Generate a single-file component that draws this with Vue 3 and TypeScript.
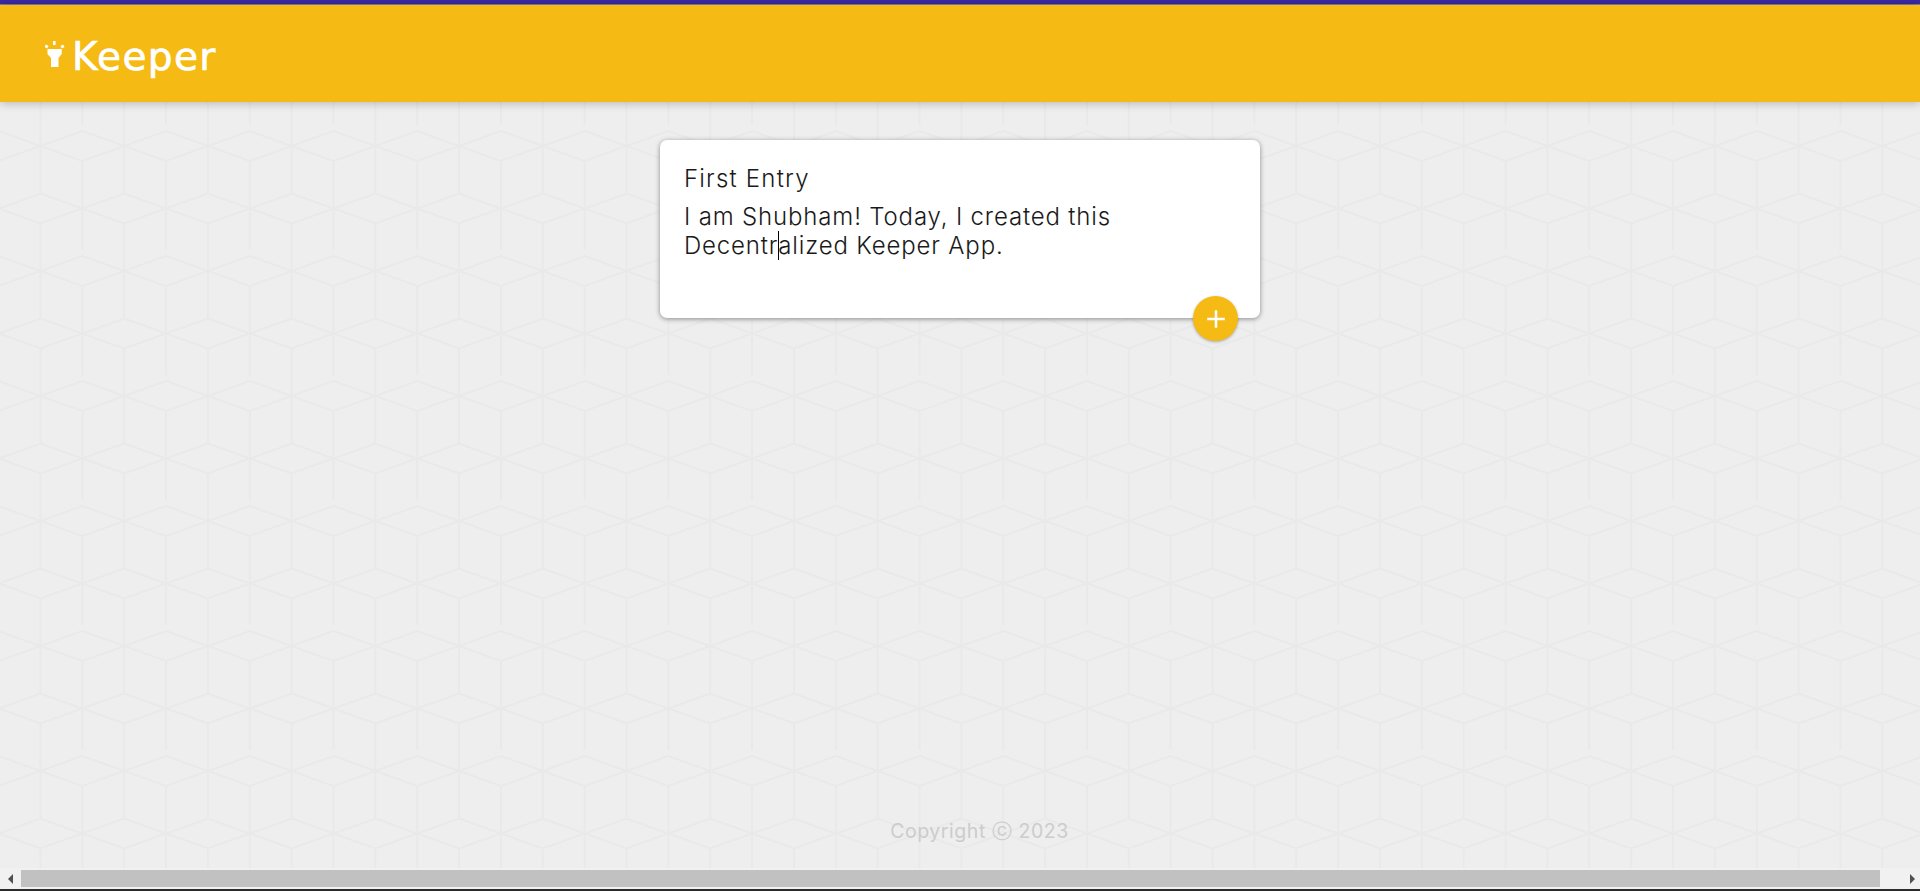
<script setup lang="ts">
const title: string = 'First Entry';
const lineOne: string = 'I am Shubham! Today, I created this';
</script>

<template>
  <div class="page">
    <svg class="tiles" width="100%" height="100%" aria-hidden="true">
      <defs>
        <pattern id="cubes" width="83.72" height="125" patternUnits="userSpaceOnUse" patternTransform="translate(-1.4 0)">
          <g fill="none" stroke="#e9e9e9" stroke-width="2">
            <path d="M0 6 41.86 21 0 36 -41.86 21Z M83.72 6 125.58 21 83.72 36 41.86 21Z" />
            <path d="M41.86 68.5 83.72 83.5 41.86 98.5 0 83.5Z" />
            <path d="M0 36V131 M83.72 36V131 M41.86 98.5V193 M41.86 -26.5V68.5" />
          </g>
        </pattern>
      </defs>
      <rect width="100%" height="100%" fill="url(#cubes)" />
    </svg>

    <div class="accent"></div>
    <header class="header">
      <svg class="lamp" width="22" height="28" viewBox="0 0 22 28" aria-hidden="true">
        <g fill="#fff">
          <path d="M2.5 8H16.7V13L13.5 17V26H6V17L2.5 13Z" />
          <rect x="0" y="4" width="3" height="3" transform="rotate(30 1.5 5.5)" />
          <rect x="8" y="0" width="2.6" height="4" />
          <rect x="16" y="4" width="3" height="3" transform="rotate(-30 17.5 5.5)" />
        </g>
      </svg>
      <h1 class="brand">Keeper</h1>
    </header>

    <main class="main">
      <form class="card" @submit.prevent>
        <div class="title">{{ title }}</div>
        <div class="body">
          <div>{{ lineOne }}</div>
          <div>Decentr<span class="caret"></span>alized Keeper App.</div>
        </div>
        <button class="fab" type="button" aria-label="Add">
          <svg width="30" height="30" viewBox="0 0 24 24" aria-hidden="true">
            <path d="M19 13h-6v6h-2v-6H5v-2h6V5h2v6h6v2z" fill="#fff" />
          </svg>
        </button>
      </form>
    </main>

    <footer class="footer">Copyright ⓒ 2023</footer>

    <div class="scrollbar">
      <span class="arrow left"></span>
      <div class="thumb"></div>
      <span class="arrow right"></span>
    </div>
    <div class="edge"></div>
  </div>
</template>

<style>
html, body { margin: 0; overflow: hidden; }
</style>

<style scoped>
.page {
  position: relative;
  display: flex;
  flex-direction: column;
  height: 891px;
  overflow: hidden;
  background: #eeeeee;
  font-family: Inter, "Liberation Sans", sans-serif;
}
.tiles { position: absolute; inset: 0; }
.accent {
  position: relative;
  flex: none;
  height: 4px;
  background: #3d2aa8;
  border-bottom: 1px solid #8d7fb0;
}
.header {
  position: relative;
  flex: none;
  display: flex;
  align-items: flex-start;
  gap: 5px;
  box-sizing: border-box;
  height: 97px;
  padding: 36px 0 0 45px;
  background: #f5ba13;
  box-shadow: 0 0 10px rgba(0, 0, 0, 0.3);
}
.brand {
  margin: -7px 0 0;
  font-family: "DejaVu Sans", sans-serif;
  font-size: 39px;
  line-height: 46px;
  font-weight: 400;
  letter-spacing: 1.4px;
  color: #fff;
  -webkit-text-stroke: 0.7px #fff;
}
.main {
  position: relative;
  flex: none;
  display: flex;
  justify-content: center;
  padding-top: 38px;
}
.card {
  position: relative;
  box-sizing: border-box;
  width: 600px;
  height: 178px;
  padding: 24px 24px 0;
  background: #fff;
  border-radius: 7px;
  box-shadow: 0 1px 5px #8a8989;
  font-size: 24px;
  font-weight: 300;
  line-height: 29px;
  color: #1a1a1a;
  letter-spacing: 0.84px;
}
.title { letter-spacing: 1.2px; }
.body { margin-top: 9px; }
.caret {
  display: inline-block;
  width: 1px;
  height: 29px;
  margin-right: -1px;
  vertical-align: top;
  background: #000;
}
.fab {
  position: absolute;
  right: 22px;
  bottom: -23px;
  display: flex;
  align-items: center;
  justify-content: center;
  width: 45px;
  height: 45px;
  padding: 0;
  border: 0;
  border-radius: 50%;
  background: #f5ba13;
  box-shadow: 0 1px 3px rgba(0, 0, 0, 0.3);
}
.footer {
  position: relative;
  flex: none;
  margin-top: auto;
  margin-bottom: 25px;
  padding-left: 39px;
  text-align: center;
  font-size: 19.5px;
  line-height: 24px;
  font-weight: 400;
  letter-spacing: 0.55px;
  color: #cccccc;
}
.scrollbar {
  position: relative;
  flex: none;
  display: flex;
  align-items: center;
  justify-content: space-between;
  box-sizing: border-box;
  height: 21px;
  padding: 0 5px 0 8px;
  background: #f1f1f1;
}
.thumb { position: absolute; left: 21px; right: 40px; top: 2px; bottom: 2px; background: #c1c1c1; }
.arrow { width: 0; height: 0; border-top: 5px solid transparent; border-bottom: 5px solid transparent; }
.arrow.left { border-right: 5px solid #505050; }
.arrow.right { border-left: 5px solid #505050; }
.edge { position: relative; flex: none; height: 2px; background: #2b2b2b; }
</style>
